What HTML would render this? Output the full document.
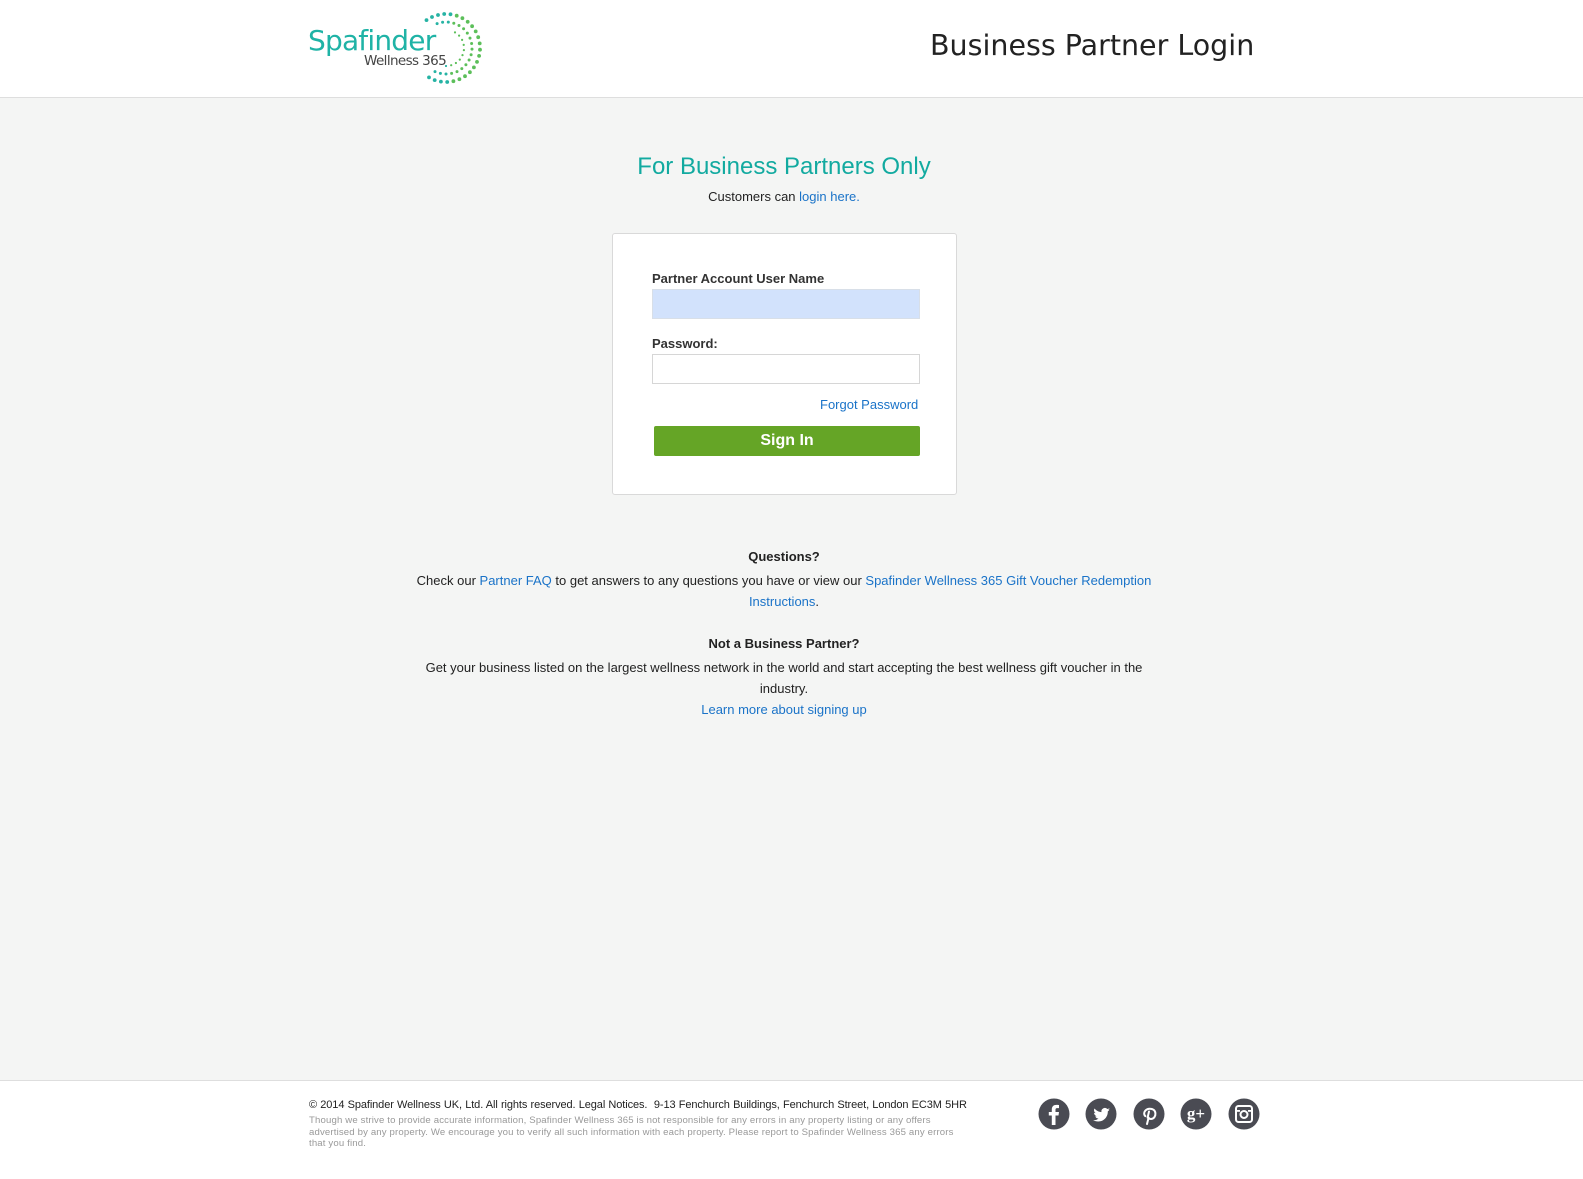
<!DOCTYPE html>
<html><head><meta charset="utf-8">
<style>
*{margin:0;padding:0;box-sizing:border-box}
body{width:1583px;height:1179px;background:#f4f5f4;font-family:"Liberation Sans",Arial,sans-serif;position:relative;overflow:hidden;color:#333}
a{color:#1a73c8;text-decoration:none}
#hdr{position:absolute;left:0;top:0;width:1583px;height:98px;background:#fff;border-bottom:1px solid #dedede}
#ft{position:absolute;left:0;top:1080px;width:1583px;height:99px;background:#fff;border-top:1px solid #dedede}
.abs{position:absolute}
.c{text-align:center;left:0;width:1568px}
</style></head><body>
<div id="hdr">
 <div class="abs" style="left:308px;top:24px;font-size:28px;color:#1fb3a6;letter-spacing:-0.8px;font-family:'DejaVu Sans',sans-serif">Spafinder</div>
 <div class="abs" style="left:364px;top:53px;font-size:13.5px;color:#444;letter-spacing:-0.6px;font-family:'DejaVu Sans',sans-serif">Wellness 365</div>
 <svg class="abs" style="left:400px;top:5px" width="90" height="90" id="dots"></svg>
 <div class="abs" style="left:930px;top:29px;font-size:28.5px;color:#222;font-family:'DejaVu Sans',sans-serif;letter-spacing:0">Business Partner Login</div>
</div>
<div class="abs c" style="top:153px;font-size:24px;color:#12aaa0">For Business Partners Only</div>
<div class="abs c" style="top:189px;font-size:13px;color:#222">Customers can <a>login here.</a></div>
<div class="abs" style="left:612px;top:233px;width:345px;height:262px;background:#fff;border:1px solid #d9d9d9;border-radius:3px">
 <div class="abs" style="left:39px;top:37px;font-size:13px;font-weight:bold;color:#333">Partner Account User Name</div>
 <div class="abs" style="left:39px;top:55px;width:268px;height:30px;background:#d2e2fc;border:1px solid #d8dfe8"></div>
 <div class="abs" style="left:39px;top:102px;font-size:13px;font-weight:bold;color:#333">Password:</div>
 <div class="abs" style="left:39px;top:120px;width:268px;height:30px;background:#fff;border:1px solid #d6d6d6"></div>
 <div class="abs" style="left:207px;top:163px;font-size:13px;color:#1a73c8">Forgot Password</div>
 <div class="abs" style="left:41px;top:192px;width:266px;height:30px;background:#65a526;border-radius:2px;color:#fff;font-weight:bold;font-size:16px;text-align:center;line-height:30px">Sign In</div>
</div>
<div class="abs c" style="top:549px;font-size:13px;font-weight:bold;color:#222">Questions?</div>
<div class="abs" style="left:410px;width:748px;top:570px;font-size:13px;line-height:21px;text-align:center;color:#222">Check our <a>Partner FAQ</a> to get answers to any questions you have or view our <a>Spafinder Wellness 365 Gift Voucher Redemption Instructions</a>.</div>
<div class="abs c" style="top:636px;font-size:13px;font-weight:bold;color:#222">Not a Business Partner?</div>
<div class="abs" style="left:410px;width:748px;top:657px;font-size:13px;line-height:21px;text-align:center;color:#222">Get your business listed on the largest wellness network in the world and start accepting the best wellness gift voucher in the industry.<br><a>Learn more about signing up</a></div>
<div id="ft">
 <div class="abs" style="left:309px;top:18px;font-size:11px;color:#222;letter-spacing:-0.1px;word-spacing:0.3px">© 2014 Spafinder Wellness UK, Ltd. All rights reserved. Legal Notices.&nbsp; 9-13 Fenchurch Buildings, Fenchurch Street, London EC3M 5HR</div>
 <div class="abs" style="left:309px;top:34px;width:660px;font-size:9.6px;line-height:11.5px;color:#999;letter-spacing:0.15px">Though we strive to provide accurate information, Spafinder Wellness 365 is not responsible for any errors in any property listing or any offers advertised by any property. We encourage you to verify all such information with each property. Please report to Spafinder Wellness 365 any errors that you find.</div>
 <svg class="abs" style="left:1038px;top:17px" width="225" height="32" viewBox="0 0 225 32">
  <g fill="#4a4b53"><circle cx="16" cy="16" r="15.5"/><circle cx="63" cy="16" r="15.5"/><circle cx="111" cy="16" r="15.5"/><circle cx="158" cy="16" r="15.5"/><circle cx="206" cy="16" r="15.5"/></g>
  <path d="M17.5 27V17.5h3l.5-3.5h-3.5v-2.2c0-1 .3-1.7 1.8-1.7H21V7c-.4 0-1.5-.1-2.7-.1-2.7 0-4.5 1.6-4.5 4.6V14h-3v3.5h3V27z" fill="#fff"/>
  <path d="M72 11.5c-.6.3-1.300.5-2 .6.7-.4 1.3-1.1 1.5-1.9-.7.4-1.4.7-2.2.8a3.4 3.4 0 0 0-5.8 3.1c-2.8-.1-5.3-1.5-7-3.6-.9 1.6-.4 3.6 1.1 4.6-.6 0-1.1-.2-1.5-.4 0 1.7 1.2 3.1 2.7 3.4-.5.1-1 .2-1.5.1.4 1.4 1.7 2.3 3.2 2.4A6.9 6.9 0 0 1 55 22c1.5 1 3.3 1.5 5.2 1.5 6.3 0 9.8-5.3 9.6-10.1.7-.5 1.3-1.1 1.7-1.8z" fill="#fff"/>
  <path d="M109 26l1.6-6.3M110.5 19.6c.5 1 1.6 1.5 2.7 1.4 3-.2 4.5-3.3 4.2-6-.3-2.9-3-4.4-5.8-4.3-3.2.1-5.6 2.4-5.4 5.2.1 1 .5 1.8 1.2 2.2M111 13.5l-1.4 6.2" stroke="#fff" stroke-width="2" fill="none" stroke-linecap="round"/>
  <text x="158" y="21" font-family="Liberation Serif,serif" font-size="17" font-weight="bold" fill="#fff" text-anchor="middle">g+</text>
  <rect x="198" y="8" width="16" height="16" rx="2.5" fill="none" stroke="#fff" stroke-width="2"/><circle cx="206" cy="16.5" r="3.5" fill="none" stroke="#fff" stroke-width="2"/><rect x="198" y="12" width="4" height="1.8" fill="#fff"/><rect x="210" y="12" width="4" height="1.8" fill="#fff"/>
 </svg>
</div>
<script>
var s=document.getElementById('dots'),h='';
var cx=46,cy=43;
function ring(r,a0,a1,n,rad){for(var i=0;i<n;i++){var t=a0+(a1-a0)*i/(n-1),a=t*Math.PI/180;var x=cx+r*Math.cos(a),y=cy+r*Math.sin(a);var col=(Math.cos(a)>0.2)?'#5cbf5a':'#26b3a4';h+='<circle cx="'+x.toFixed(1)+'" cy="'+y.toFixed(1)+'" r="'+rad+'" fill="'+col+'"/>';}}
ring(34,-125,120,24,1.9);ring(26,-110,115,19,1.5);ring(18,-60,90,10,1.1);
s.innerHTML=h;
</script>
</body></html>
